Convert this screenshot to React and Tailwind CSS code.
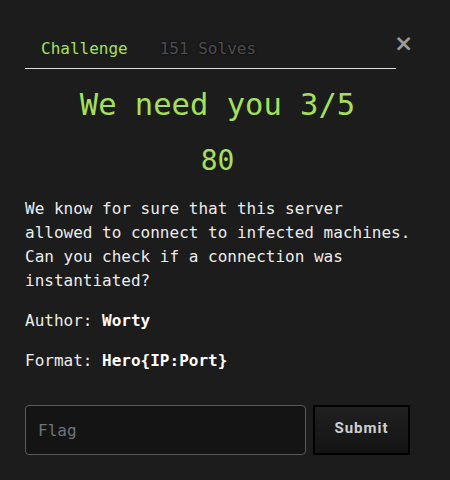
import React from "react";

export default function App() {
  const mono = { fontFamily: '"DejaVu Sans Mono", monospace' };
  return (
    <div
      className="w-[450px] h-[480px] bg-[#1c1c1c] text-[#e6e6e6] overflow-hidden"
      style={mono}
    >
      <div className="pl-[25px] pr-[25px] pt-[36px]">
        <div className="flex items-start">
          <div className="w-[371px] flex border-b border-[#dddddd] h-[33px]">
            <span className="pl-[16px] pr-[32px] text-[16px] leading-[26px] text-[#a6e05a]">
              Challenge
            </span>
            <span
              className="text-[16px] leading-[26px] text-[#4d4d4d]"
              style={{ textShadow: "0 0 3px rgba(0,0,0,0.9)" }}
            >
              151 Solves
            </span>
          </div>
          <div
            className="ml-[-2px] mt-[-3px] text-[#9a9a9a] font-bold text-[23px] leading-[20px]"
            style={{ fontFamily: '"DejaVu Sans", sans-serif' }}
          >
            ×
          </div>
        </div>
        <div className="w-[385px]">
          <h2 className="text-center text-[30.5px] leading-[40px] mt-[16px] text-[#a6e05a]">
            We need you 3/5
          </h2>
          <h3 className="text-center text-[28px] leading-[36px] mt-[18px] text-[#a6e05a]">
            80
          </h3>
        </div>
        <div className="mt-[18px] text-[16px] leading-[24px] text-[#ececec] w-[400px]">
          <p>
            We know for sure that this server
            <br />
            allowed to connect to infected machines.
            <br />
            Can you check if a connection was
            <br />
            instantiated?
          </p>
          <p className="mt-[16px]">
            Author: <b className="text-white">Worty</b>
          </p>
          <p className="mt-[16px]">
            Format: <b className="text-white">Hero{"{IP:Port}"}</b>
          </p>
        </div>
        <div className="flex mt-[32px] gap-[7px]">
          <input
            className="w-[281px] h-[50px] rounded-[4px] border border-[#5a5a5a] bg-[#141414] px-[12px] text-[16px] text-[#ddd] placeholder:text-[#6c757d] outline-none"
            style={mono}
            placeholder="Flag"
          />
          <button
            className="w-[97px] h-[50px] border-[2px] border-black bg-gradient-to-b from-[#202020] to-[#141414] text-[#cfcfcf] font-bold text-[15px] tracking-[1px] pb-[3px]"
            style={{ fontFamily: "Roboto, sans-serif" }}
          >
            Submit
          </button>
        </div>
      </div>
    </div>
  );
}
